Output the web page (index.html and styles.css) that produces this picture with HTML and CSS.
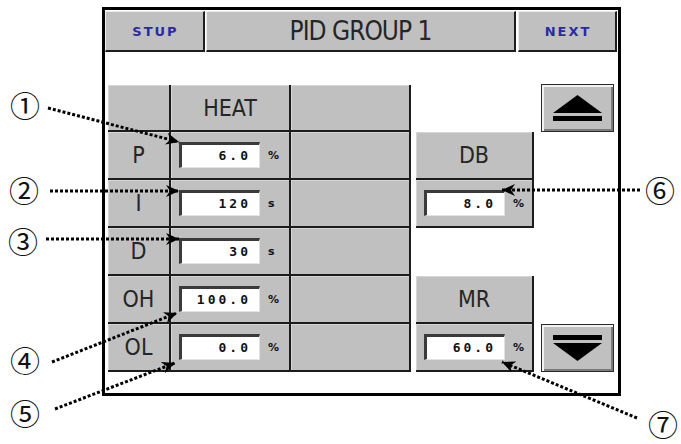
FILE: index.html
```html
<html lang="ko">
<head>
<meta http-equiv="Content-Type" content="text/html; charset=utf-8"/>
<link rel="stylesheet" href="styles.css">
</head>
<body>
<p class="caption">Fig. 7-2 PID Group Setting Screen, Setup(group 1)</p>

<div class="screen">
  <div class="titlebar">
    <div class="bevel key stup">STUP</div>
    <div class="bevel heading">PID GROUP 1</div>
    <div class="bevel key next">NEXT</div>
  </div>

  <div class="grid">
    <div class="row head">
      <div class="cell label"></div>
      <div class="cell value center lcd">HEAT</div>
      <div class="cell spare"></div>
      <div class="side"></div>
      <div class="scroll">
        <div class="arrow">
          <svg width="49" height="26" viewBox="0 0 49 26"><polygon points="24.5,0 49,18 0,18" fill="#000"/><rect x="0" y="21" width="49" height="5" fill="#000"/></svg>
        </div>
      </div>
    </div>

    <div class="row">
      <div class="cell label lcd">P</div>
      <div class="cell value"><div class="field">6.0</div><span class="unit">%</span></div>
      <div class="cell spare"></div>
      <div class="cell side center lcd">DB</div>
      <div class="scroll"></div>
    </div>

    <div class="row">
      <div class="cell label lcd">I</div>
      <div class="cell value"><div class="field">120</div><span class="unit">s</span></div>
      <div class="cell spare"></div>
      <div class="cell side"><div class="field">8.0</div><span class="unit">%</span></div>
      <div class="scroll"></div>
    </div>

    <div class="row">
      <div class="cell label lcd">D</div>
      <div class="cell value"><div class="field">30</div><span class="unit">s</span></div>
      <div class="cell spare"></div>
      <div class="side"></div>
      <div class="scroll"></div>
    </div>

    <div class="row">
      <div class="cell label lcd">OH</div>
      <div class="cell value"><div class="field">100.0</div><span class="unit">%</span></div>
      <div class="cell spare"></div>
      <div class="cell side center lcd">MR</div>
      <div class="scroll"></div>
    </div>

    <div class="row">
      <div class="cell label lcd">OL</div>
      <div class="cell value"><div class="field">0.0</div><span class="unit">%</span></div>
      <div class="cell spare"></div>
      <div class="cell side"><div class="field">60.0</div><span class="unit">%</span></div>
      <div class="scroll">
        <div class="arrow">
          <svg width="49" height="26" viewBox="0 0 49 26"><rect x="0" y="0" width="49" height="5" fill="#000"/><polygon points="0,8 49,8 24.5,26" fill="#000"/></svg>
        </div>
      </div>
    </div>
  </div>
</div>

<!-- callouts -->
<svg class="callouts" width="681" height="444" viewBox="0 0 681 444">
  <defs>
    <marker id="tip" markerUnits="userSpaceOnUse" markerWidth="14" markerHeight="12" refX="13" refY="6" orient="auto">
      <path d="M0,0 L13,6 L0,12 L4,6 z" fill="#000"/>
    </marker>
  </defs>
  <g class="dots" marker-end="url(#tip)">
    <line x1="48" y1="108" x2="179" y2="142"/>
    <line x1="50" y1="191" x2="179" y2="191"/>
    <line x1="46" y1="239" x2="179" y2="239"/>
    <line x1="52" y1="362" x2="177" y2="313"/>
    <line x1="55" y1="409" x2="175" y2="363"/>
    <line x1="640" y1="190" x2="502" y2="190"/>
    <line x1="637" y1="418" x2="502" y2="362"/>
  </g>
  <g class="marks">
    <text x="25" y="104">①</text>
    <text x="24" y="189">②</text>
    <text x="23" y="240">③</text>
    <text x="25" y="359">④</text>
    <text x="25" y="412">⑤</text>
    <text x="660" y="189">⑥</text>
    <text x="663" y="423">⑦</text>
  </g>
</svg>
</body>
</html>
```

FILE: styles.css
```css
body {
    margin: 0;
    background-color: #fff;
    position: relative;
    width: 681px;
    height: 444px;
    overflow: hidden;
    font-family: "Liberation Sans", "Noto Sans CJK KR", sans-serif;
}
.caption {
    margin: -18px 0 0 100px;
    height: 20px;
    font-size: 17px;
    line-height: 20px;
    color: #333;
    white-space: nowrap;
}
.screen {
    box-sizing: border-box;
    width: 519px;
    height: 389px;
    margin: 5px 0 0 102px;
    border: 3px solid #000;
    padding-top: 1px;
}
.titlebar {
    display: flex;
    height: 41px;
}
.bevel {
    box-sizing: border-box;
    height: 41px;
    background-color: #c0c0c0;
    border-style: solid;
    border-width: 1px 2px 2px 1px;
    border-color: #ececec #1e1e1e #1e1e1e #ececec;
    display: flex;
    align-items: center;
    justify-content: center;
}
.stup { width: 100px; }
.heading {
    width: 310px;
    margin: 0 2px 0 1px;
    font-family: "Liberation Sans Narrow", "DejaVu Sans Condensed", "DejaVu Sans", sans-serif;
    font-stretch: condensed;
    font-size: 26px;
    letter-spacing: -1px;
    color: #262626;
}
.next { width: 99px; }
.key {
    font-family: "DejaVu Sans", sans-serif;
    font-weight: bold;
    font-size: 13px;
    letter-spacing: 2px;
    padding-left: 2px;
    color: #2a2aa6;
}
.grid {
    margin: 33px 0 0 3px;
}
.row {
    display: flex;
    height: 48px;
}
.row.head { height: 47px; }
.cell {
    box-sizing: border-box;
    height: 100%;
    background-color: #c0c0c0;
    border-right: 2px solid #1c1c1c;
    border-bottom: 2px solid #1c1c1c;
    box-shadow: inset 1px 1px 0 #d6d6d6;
    display: flex;
    align-items: center;
}
.label {
    width: 63px;
    justify-content: center;
}
.value { width: 120px; }
.spare { width: 120px; }
.side {
    width: 118px;
    margin-left: 5px;
}
.center { justify-content: center; }
.lcd {
    font-family: "Liberation Sans Narrow", "DejaVu Sans Condensed", "DejaVu Sans", sans-serif;
    font-stretch: condensed;
    font-size: 23px;
    color: #262626;
}
.field {
    box-sizing: border-box;
    width: 81px;
    height: 26px;
    margin-left: 8px;
    padding-right: 8px;
    background-color: #fff;
    border-style: solid;
    border-width: 3px 1px 1px 3px;
    border-color: #3a3a3a #e2e2e2 #e2e2e2 #3a3a3a;
    text-align: right;
    font-family: "DejaVu Sans Mono", monospace;
    font-weight: bold;
    font-size: 13px;
    line-height: 21px;
    letter-spacing: 3px;
    color: #111;
}
.unit {
    margin-left: 8px;
    font-family: "DejaVu Sans", sans-serif;
    font-weight: bold;
    font-size: 11px;
    color: #111;
}
.scroll {
    width: 73px;
    margin-left: 7px;
}
.arrow {
    box-sizing: border-box;
    width: 73px;
    height: 48px;
    background-color: #c0c0c0;
    border: 1px solid #2a2a2a;
    box-shadow: inset 2px 2px 0 #f2f2f2, inset -2px -2px 0 #7c7c7c;
    display: flex;
    align-items: center;
    justify-content: center;
}
.head .arrow { margin-top: -1px; }
.callouts {
    position: absolute;
    left: 0;
    top: 0;
}
.dots line {
    stroke: #000;
    stroke-width: 3;
    stroke-dasharray: 3 2;
}
.marks text {
    font-family: "Noto Sans CJK KR", sans-serif;
    font-size: 30px;
    text-anchor: middle;
    dominant-baseline: central;
    fill: #111;
}
```
